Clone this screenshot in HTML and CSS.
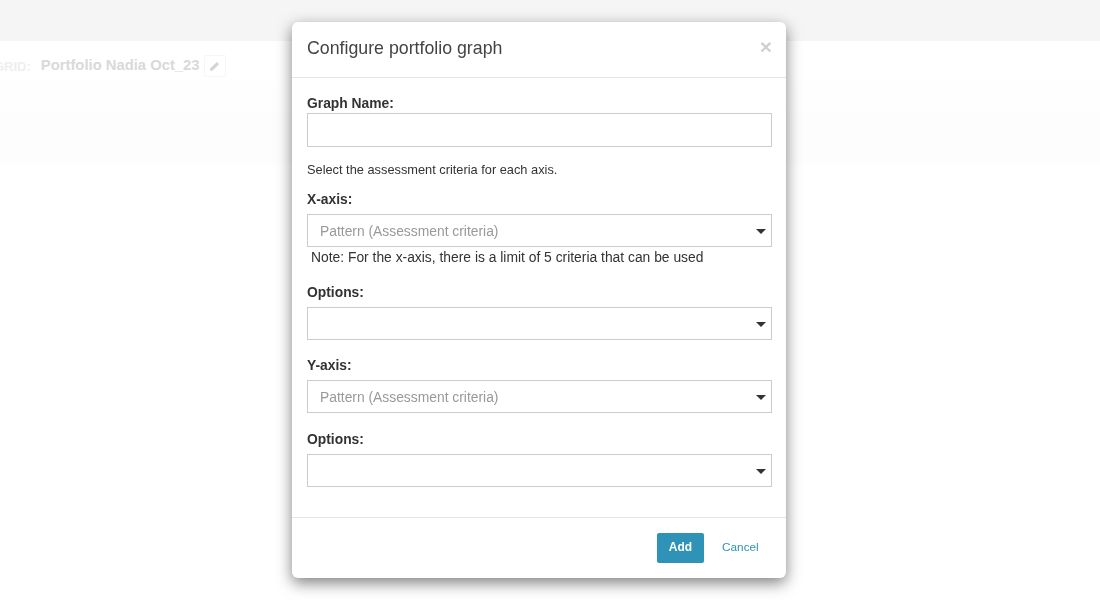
FILE: index.html
```html
<!DOCTYPE html>
<html lang="en">
<head>
<meta charset="utf-8">
<title>Configure portfolio graph</title>
<link rel="stylesheet" href="styles.css">
</head>
<body>
<div class="page">
  <div class="topbar"></div>
  <div class="titlerow">
    <span class="grid-label">GRID:</span>
    <span class="grid-name">Portfolio Nadia Oct_23</span>
    <span class="edit-btn">
      <svg viewBox="0 0 12 12" width="11" height="11"><path d="M1 11l.6-3L8 1.6a1 1 0 0 1 1.400 0l1 1a1 1 0 0 1 0 1.400L4 10.400z" fill="#d4d4d4"/></svg>
    </span>
  </div>
  <div class="band"></div>
</div>
<div class="overlay">
  <div class="modal">
    <header class="modal-header">
      <h2 class="modal-title">Configure portfolio graph</h2>
      <span class="close">×</span>
    </header>
    <div class="modal-body">
      <label class="label first">Graph Name:</label>
      <div class="input"></div>
      <p class="hint">Select the assessment criteria for each axis.</p>
      <label class="label xaxis">X-axis:</label>
      <div class="input select"><span class="placeholder">Pattern (Assessment criteria)</span><i class="caret"></i></div>
      <p class="note">Note: For the x-axis, there is a limit of 5 criteria that can be used</p>
      <label class="label opt1">Options:</label>
      <div class="input select"><i class="caret"></i></div>
      <label class="label yaxis">Y-axis:</label>
      <div class="input select"><span class="placeholder">Pattern (Assessment criteria)</span><i class="caret"></i></div>
      <label class="label opt2">Options:</label>
      <div class="input select"><i class="caret"></i></div>
    </div>
    <footer class="modal-footer">
      <button class="btn-add">Add</button>
      <a class="btn-cancel">Cancel</a>
    </footer>
  </div>
</div>
</body>
</html>
```

FILE: styles.css
```css
* { box-sizing: border-box; }
html, body { margin: 0; height: 100%; overflow: hidden; }
body { background: #fff; font-family: "Liberation Sans", Arial, sans-serif; color: #333; }

.page { height: 609px; }
.topbar { height: 41px; background: #f5f5f5; }
.titlerow { height: 70px; display: flex; align-items: flex-start; padding: 14px 0 0 0; background: linear-gradient(#fff 0 40px, #fefefe 40px); }
.grid-label { flex: none; margin-left: -6px; margin-top: 4px; font-size: 13px; font-weight: 700; color: #efefef; white-space: nowrap; }
.grid-name { margin-left: 10px; font-size: 14.8px; font-weight: 700; color: #d9d9d9; line-height: 20px; }
.edit-btn { width: 22px; height: 22px; margin-left: 4px; border: 1px solid #f6f6f6; border-radius: 2px; display: flex; align-items: center; justify-content: center; }
.band { height: 53px; background: #fdfdfd; }

.overlay { position: fixed; inset: 0; display: flex; justify-content: center; align-items: flex-start; padding: 22px 22px 0 0; }
.modal { width: 494px; height: 556px; background: #fff; border-radius: 6px; box-shadow: 0 5px 15px rgba(0,0,0,.5); display: flex; flex-direction: column; }
.modal-header { height: 56px; flex: none; border-bottom: 1px solid #e5e5e5; display: flex; justify-content: space-between; padding: 14px 14px 0 15px; }
.modal-title { margin: 0; font-size: 17.750px; font-weight: 400; line-height: 24px; color: #444; }
.close { font-size: 21px; font-weight: 700; line-height: 22px; color: #d0d0d0; }
.modal-body { flex: 1; padding: 0 14.500px 0 15px; display: flex; flex-direction: column; }
.label { display: block; font-size: 13.850px; font-weight: 700; line-height: 16px; color: #333; }
.label.first { margin-top: 17px; margin-bottom: 2px; }
.label.xaxis { margin-top: 13px; margin-bottom: 7px; }
.label.opt1 { margin-top: 18.500px; margin-bottom: 7px; }
.label.yaxis { margin-top: 16.500px; margin-bottom: 7px; }
.label.opt2 { margin-top: 17.500px; margin-bottom: 7px; }
.input { height: 33.500px; border: 1px solid #ccc; background: #fff; flex: none; }
.select { position: relative; display: flex; align-items: center; padding: 1px 0 0 12px; }
.placeholder { font-size: 13.850px; color: #999; }
.caret { position: absolute; right: 5px; top: 14px; width: 0; height: 0; border-left: 5px solid transparent; border-right: 5px solid transparent; border-top: 5px solid #333; }
.hint { margin: 15px 0 0; font-size: 12.800px; line-height: 16px; color: #333; }
.note { margin: 2px 0 0 4px; font-size: 13.850px; line-height: 16px; color: #333; }
.modal-footer { height: 61px; flex: none; border-top: 1px solid #e5e5e5; display: flex; align-items: flex-start; padding: 15px 0 0 365px; }
.btn-add { width: 47px; height: 30px; padding: 0 0 2px; border: 0; border-radius: 2px; background: #2e93b7; color: #fff; font: 700 12px "Liberation Sans", Arial, sans-serif; }
.btn-cancel { margin-left: 18px; font-size: 11.800px; line-height: 28px; color: #2e93b7; }
```
